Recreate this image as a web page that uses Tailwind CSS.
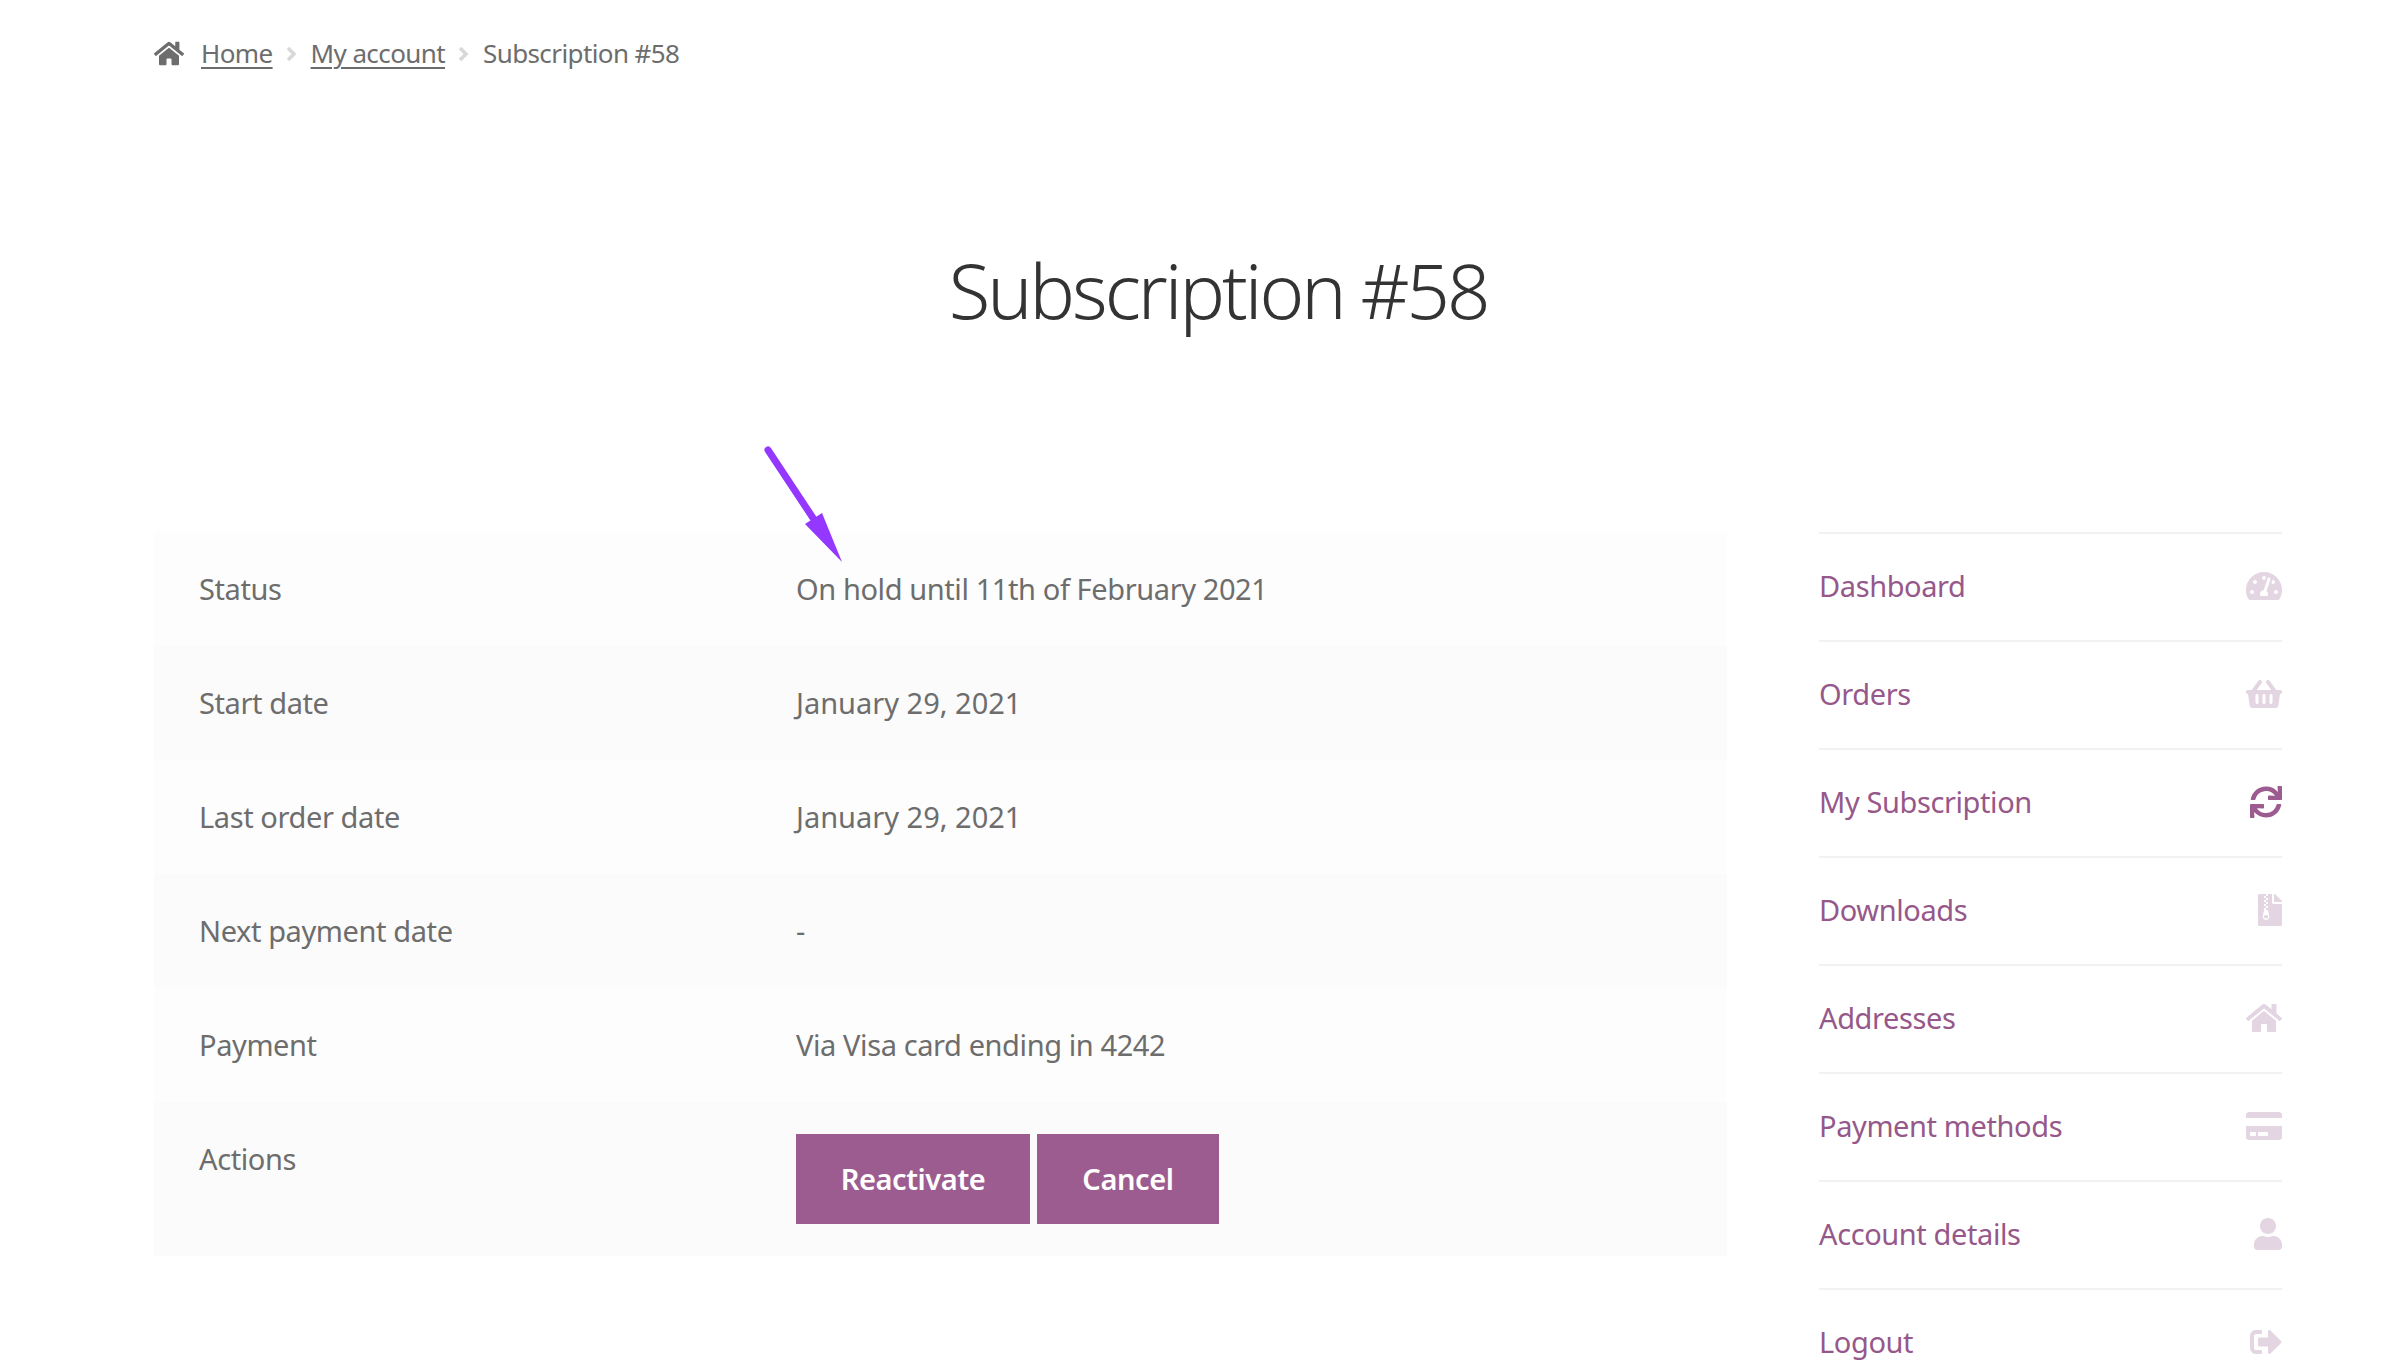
<!DOCTYPE html>
<html lang="en">
  <head>
    <meta charset="utf-8" />
    <title>Subscription #58</title>
    <script src="https://cdn.jsdelivr.net/npm/@tailwindcss/browser@4"></script>
  </head>
  <body class="bg-white font-['Noto_Sans',sans-serif] text-[#6d6d6d]">
    <main class="relative h-[1368px] overflow-hidden">
      <div class="ml-[154px] w-[2128px]">
        <!-- breadcrumb -->
        <nav class="flex h-[108px] items-center pb-[1px] text-[26px] tracking-[-0.6px]">
          <svg class="mr-[17px] h-[27px] w-[30px] fill-[#6d6d6d]" viewBox="0 0 576 512"><path d="M280.37 148.26L96 300.11V464a16 16 0 0 0 16 16l112.06-.29a16 16 0 0 0 15.92-16V368a16 16 0 0 1 16-16h64a16 16 0 0 1 16 16v95.64a16 16 0 0 0 16 16.05L464 480a16 16 0 0 0 16-16V300L295.67 148.26a12.19 12.19 0 0 0-15.3 0zM571.6 251.47L488 182.56V44.05a12 12 0 0 0-12-12h-56a12 12 0 0 0-12 12v72.61L318.47 43a48 48 0 0 0-61 0L4.34 251.47a12 12 0 0 0-1.6 16.9l25.5 31A12 12 0 0 0 45.15 301l235.22-193.74a12.19 12.19 0 0 1 15.3 0L530.9 301a12 12 0 0 0 16.9-1.6l25.5-31a12 12 0 0 0-1.7-16.93z"/></svg>
          <a class="underline decoration-2 underline-offset-4">Home</a>
          <svg class="mx-[13px] h-[16px] w-[12px] stroke-[#d8d8d8]" viewBox="0 0 12 16" fill="none" stroke-width="3.5"><path d="M2 2l6 6-6 6"/></svg>
          <a class="underline decoration-2 underline-offset-4">My account</a>
          <svg class="mx-[13px] h-[16px] w-[12px] stroke-[#d8d8d8]" viewBox="0 0 12 16" fill="none" stroke-width="3.5"><path d="M2 2l6 6-6 6"/></svg>
          <span>Subscription #58</span>
        </nav>

        <h1 class="mt-[122px] text-center text-[76px] leading-[120px] font-light tracking-[-3px] text-[#333333]">Subscription #58</h1>

        <div class="mt-[182px] flex items-start justify-between">
          <!-- subscription details -->
          <div class="w-[1573px] text-[29px] tracking-[-0.4px]">
            <div class="flex h-[114px] items-center bg-[#fdfdfd] px-[45px]"><span class="w-[597px]">Status</span><span>On hold until 11th of February 2021</span></div>
            <div class="flex h-[114px] items-center bg-[#fbfbfb] px-[45px]"><span class="w-[597px]">Start date</span><span class="tracking-normal">January 29, 2021</span></div>
            <div class="flex h-[114px] items-center bg-[#fdfdfd] px-[45px]"><span class="w-[597px]">Last order date</span><span class="tracking-normal">January 29, 2021</span></div>
            <div class="flex h-[114px] items-center bg-[#fbfbfb] px-[45px]"><span class="w-[597px]">Next payment date</span><span>-</span></div>
            <div class="flex h-[114px] items-center bg-[#fdfdfd] px-[45px]"><span class="w-[597px]">Payment</span><span>Via Visa card ending in 4242</span></div>
            <div class="flex h-[154px] items-start bg-[#fbfbfb] px-[45px]">
              <span class="mt-[35px] w-[597px]">Actions</span>
              <div class="mt-[32px] flex gap-[7px] font-semibold text-white">
                <a class="flex h-[90px] w-[234px] items-center justify-center bg-[#9d5c8f]">Reactivate</a>
                <a class="flex h-[90px] w-[182px] items-center justify-center bg-[#9d5c8f]">Cancel</a>
              </div>
            </div>
          </div>

          <!-- account menu -->
          <ul class="w-[463px] text-[29px] tracking-[-0.4px] text-[#96588a]">
            <li class="flex h-[108px] items-center justify-between border-t-[2px] border-[#f2f2f2] pb-[3px]">
              <span>Dashboard</span>
              <svg class="h-[32px] w-[36px] fill-[#e3d5e1]" viewBox="0 0 576 512"><path d="M288 32C128.94 32 0 160.94 0 320c0 52.8 14.25 102.26 39.06 144.8 5.61 9.62 16.3 15.2 27.44 15.2h443c11.14 0 21.83-5.58 27.44-15.2C561.75 422.26 576 372.8 576 320c0-159.06-128.94-288-288-288zm0 64c14.71 0 26.58 10.13 30.32 23.65-1.11 2.26-2.64 4.23-3.45 6.67l-9.22 27.67c-5.13 3.49-10.97 6.01-17.64 6.01-17.67 0-32-14.33-32-32S270.33 96 288 96zM96 384c-17.67 0-32-14.33-32-32s14.33-32 32-32 32 14.33 32 32-14.33 32-32 32zm48-160c-17.67 0-32-14.33-32-32s14.33-32 32-32 32 14.33 32 32-14.33 32-32 32zm246.77-72.41l-61.33 184C343.13 347.33 352 364.54 352 384c0 11.72-3.38 22.55-8.88 32H232.88c-5.5-9.45-8.88-20.28-8.88-32 0-33.94 26.5-61.43 59.9-63.59l61.34-184.01c4.17-12.56 17.73-19.45 30.36-15.17 12.57 4.19 19.35 17.79 15.17 30.36zm14.66 57.2l15.52-46.55c3.47-1.29 7.13-2.23 11.05-2.23 17.67 0 32 14.33 32 32s-14.33 32-32 32c-11.38-.01-20.89-6.28-26.57-15.22zM480 384c-17.67 0-32-14.33-32-32s14.33-32 32-32 32 14.33 32 32-14.33 32-32 32z"/></svg>
            </li>
            <li class="flex h-[108px] items-center justify-between border-t-[2px] border-[#f2f2f2] pb-[3px]">
              <span>Orders</span>
              <svg class="h-[32px] w-[36px] fill-[#e3d5e1]" viewBox="0 0 576 512"><path d="M576 216v16c0 13.255-10.745 24-24 24h-8l-26.113 182.788C514.509 462.435 494.257 480 470.37 480H105.63c-23.887 0-44.139-17.565-47.518-41.212L32 256h-8c-13.255 0-24-10.745-24-24v-16c0-13.255 10.745-24 24-24h67.341l106.78-146.821c10.395-14.292 30.407-17.453 44.701-7.058 14.293 10.395 17.453 30.408 7.058 44.701L170.477 192h235.046L326.12 82.821c-10.395-14.292-7.234-34.306 7.059-44.701 14.291-10.395 34.306-7.235 44.701 7.058L484.659 192H552c13.255 0 24 10.745 24 24zM312 392V280c0-13.255-10.745-24-24-24s-24 10.745-24 24v112c0 13.255 10.745 24 24 24s24-10.745 24-24zm112 0V280c0-13.255-10.745-24-24-24s-24 10.745-24 24v112c0 13.255 10.745 24 24 24s24-10.745 24-24zm-224 0V280c0-13.255-10.745-24-24-24s-24 10.745-24 24v112c0 13.255 10.745 24 24 24s24-10.745 24-24z"/></svg>
            </li>
            <li class="flex h-[108px] items-center justify-between border-t-[2px] border-[#f2f2f2] pb-[3px]">
              <span>My Subscription</span>
              <svg class="h-[32px] w-[32px] fill-[#9d5c8f]" viewBox="0 0 512 512"><path d="M440.65 12.57l4 82.77A247.16 247.16 0 0 0 255.83 8C134.73 8 33.91 94.92 12.29 209.82A12 12 0 0 0 24.09 224h49.05a12 12 0 0 0 11.67-9.26 175.91 175.91 0 0 1 317-56.94l-101.46-4.86a12 12 0 0 0-12.57 12v47.41a12 12 0 0 0 12 12H500a12 12 0 0 0 12-12V12a12 12 0 0 0-12-12h-47.37a12 12 0 0 0-11.98 12.57zM255.83 432a175.61 175.61 0 0 1-146-77.8l101.8 4.87a12 12 0 0 0 12.57-12v-47.4a12 12 0 0 0-12-12H12a12 12 0 0 0-12 12V500a12 12 0 0 0 12 12h47.35a12 12 0 0 0 12-12.6l-4.15-82.57A247.17 247.17 0 0 0 255.83 504c121.11 0 221.93-86.92 243.55-201.82a12 12 0 0 0-11.8-14.18h-49.05a12 12 0 0 0-11.67 9.26A175.86 175.86 0 0 1 255.83 432z"/></svg>
            </li>
            <li class="flex h-[108px] items-center justify-between border-t-[2px] border-[#f2f2f2] pb-[3px]">
              <span>Downloads</span>
              <svg class="h-[32px] w-[24px] fill-[#e3d5e1]" viewBox="0 0 384 512"><path d="M377 105L279.1 7c-4.5-4.5-10.6-7-17-7H256v128h128v-6.1c0-6.3-2.5-12.4-7-16.9zM128.4 336c-17.9 0-32.4 12.1-32.4 27 0 15 14.6 27 32.5 27s32.4-12.1 32.4-27-14.6-27-32.5-27zM224 136V0h-63.6v32h-32V0H24C10.7 0 0 10.7 0 24v464c0 13.3 10.7 24 24 24h336c13.3 0 24-10.7 24-24V160H248c-13.2 0-24-10.8-24-24zM95.9 32h32v32h-32zm32.3 384c-33.2 0-58-30.4-51.4-62.9L96.4 256v-32h32v-32h-32v-32h32v-32h-32V96h32V64h32v32h-32v32h32v32h-32v32h32v32h-32v32h22.1c5.7 0 10.7 4.1 11.8 9.7l17.3 87.7c6.4 32.4-18.4 62.6-51.4 62.6z"/></svg>
            </li>
            <li class="flex h-[108px] items-center justify-between border-t-[2px] border-[#f2f2f2] pb-[3px]">
              <span>Addresses</span>
              <svg class="h-[32px] w-[36px] fill-[#e3d5e1]" viewBox="0 0 576 512"><path d="M280.37 148.26L96 300.11V464a16 16 0 0 0 16 16l112.06-.29a16 16 0 0 0 15.92-16V368a16 16 0 0 1 16-16h64a16 16 0 0 1 16 16v95.64a16 16 0 0 0 16 16.05L464 480a16 16 0 0 0 16-16V300L295.67 148.26a12.19 12.19 0 0 0-15.3 0zM571.6 251.47L488 182.56V44.05a12 12 0 0 0-12-12h-56a12 12 0 0 0-12 12v72.61L318.47 43a48 48 0 0 0-61 0L4.34 251.47a12 12 0 0 0-1.6 16.9l25.5 31A12 12 0 0 0 45.15 301l235.22-193.74a12.19 12.19 0 0 1 15.3 0L530.9 301a12 12 0 0 0 16.9-1.6l25.5-31a12 12 0 0 0-1.7-16.93z"/></svg>
            </li>
            <li class="flex h-[108px] items-center justify-between border-t-[2px] border-[#f2f2f2] pb-[3px]">
              <span>Payment methods</span>
              <svg class="h-[32px] w-[36px] fill-[#e3d5e1]" viewBox="0 0 576 512"><path d="M0 432c0 26.5 21.5 48 48 48h480c26.5 0 48-21.5 48-48V256H0v176zm192-68c0-6.6 5.4-12 12-12h136c6.6 0 12 5.4 12 12v40c0 6.6-5.4 12-12 12H204c-6.6 0-12-5.4-12-12v-40zm-128 0c0-6.6 5.4-12 12-12h72c6.6 0 12 5.4 12 12v40c0 6.6-5.4 12-12 12H76c-6.6 0-12-5.4-12-12v-40zM576 80v48H0V80c0-26.5 21.5-48 48-48h480c26.5 0 48 21.5 48 48z"/></svg>
            </li>
            <li class="flex h-[108px] items-center justify-between border-t-[2px] border-[#f2f2f2] pb-[3px]">
              <span>Account details</span>
              <svg class="h-[32px] w-[28px] fill-[#e3d5e1]" viewBox="0 0 448 512"><path d="M224 256c70.7 0 128-57.3 128-128S294.7 0 224 0 96 57.3 96 128s57.3 128 128 128zm89.6 32h-16.7c-22.2 10.2-46.9 16-72.9 16s-50.6-5.8-72.9-16h-16.7C60.2 288 0 348.2 0 422.4V464c0 26.5 21.5 48 48 48h352c26.5 0 48-21.5 48-48v-41.6c0-74.2-60.2-134.4-134.4-134.4z"/></svg>
            </li>
            <li class="flex h-[108px] items-center justify-between border-t-[2px] border-[#f2f2f2] pb-[3px]">
              <span>Logout</span>
              <svg class="h-[32px] w-[32px] fill-[#e3d5e1]" viewBox="0 0 512 512"><path d="M497 273L329 441c-15 15-41 4.5-41-17v-96H152c-13.3 0-24-10.7-24-24v-96c0-13.3 10.7-24 24-24h136V88c0-21.4 25.9-32 41-17l168 168c9.3 9.4 9.3 24.6 0 34zM192 436v-40c0-6.6-5.4-12-12-12H96c-17.7 0-32-14.3-32-32V160c0-17.7 14.3-32 32-32h84c6.6 0 12-5.4 12-12V76c0-6.6-5.4-12-12-12H96c-53 0-96 43-96 96v192c0 53 43 96 96 96h84c6.6 0 12-5.4 12-12z"/></svg>
            </li>
          </ul>
        </div>
      </div>

      <!-- annotation arrow -->
      <svg class="absolute top-[440px] left-[760px] h-[130px] w-[90px]" viewBox="760 440 90 130">
        <path d="M768 450L813 518" stroke="#9437ff" stroke-width="7" stroke-linecap="round" fill="none"/>
        <path d="M805 524L822 513L842 562Z" fill="#9437ff"/>
      </svg>
    </main>
  </body>
</html>
